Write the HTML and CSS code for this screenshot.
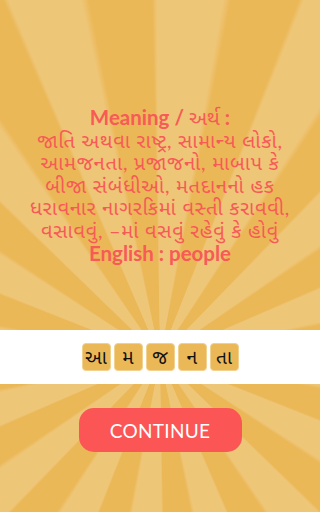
FILE: index.html
```html
<!DOCTYPE html>
<html lang="gu">
<head>
<meta charset="utf-8">
<title>Meaning</title>
<link rel="stylesheet" href="styles.css">
</head>
<body>
<div class="screen">
  <div class="meaning">
    <div class="label">Meaning / <span class="gu">અર્થ</span> :</div>
    <div class="gu-text">જાતિ અથવા રાષ્ટ્ર, સામાન્ય લોકો,<br>આમજનતા, પ્રજાજનો, માબાપ કે<br>બીજા સંબંધીઓ, મતદાનનો હક<br>ધરાવનાર નાગરકિમાં વસ્તી કરાવવી,<br>વસાવવું, –માં વસવું રહેવું કે હોવું</div>
    <div class="label">English : people</div>
  </div>
  <div class="band">
    <div class="tiles">
      <span class="tile">આ</span>
      <span class="tile">મ</span>
      <span class="tile">જ</span>
      <span class="tile">ન</span>
      <span class="tile">તા</span>
    </div>
  </div>
  <div class="actions">
    <button class="continue">CONTINUE</button>
  </div>
</div>
</body>
</html>
```
FILE: styles.css
```css
html, body {
  margin: 0;
  padding: 0;
}
body {
  height: 512px;
  overflow: hidden;
  font-family: Lato, "Noto Sans Gujarati", "Noto Sans", sans-serif;
}
.screen {
  height: 512px;
  display: flex;
  flex-direction: column;
  background-color: #ebb858;
  background-image: repeating-conic-gradient(from -0.5deg at 50% 357px,
    #eec678 0deg, #eec678 10.5deg, #ebb858 11.75deg, #ebb858 21.75deg, #eec678 22.5deg);
}
.meaning {
  padding-top: 106px;
  text-align: center;
  color: #f85a56;
  font-size: 20.5px;
  line-height: 22.6px;
  white-space: nowrap;
}
.label {
  font-weight: 700;
}
.gu {
  font-weight: 400;
}
.gu-text {
  font-weight: 400;
  font-size: 20px;
  letter-spacing: 0.7px;
}
.band {
  margin-top: 66px;
  height: 54px;
  background: #ffffff;
  display: flex;
  align-items: center;
  justify-content: center;
}
.tiles {
  display: flex;
  gap: 3px;
}
.tile {
  width: 27px;
  height: 26px;
  border: 1px solid #f2d08e;
  border-radius: 4px;
  background: #ebb858;
  color: #111111;
  font-size: 19px;
  font-weight: 400;
  line-height: 26px;
  text-align: center;
}
.actions {
  margin-top: 24px;
  display: flex;
  justify-content: center;
}
.continue {
  width: 163px;
  height: 44px;
  border: none;
  border-radius: 15px;
  background: #fc5555;
  color: #ffffff;
  font-family: Lato, "Open Sans", sans-serif;
  font-size: 19px;
  letter-spacing: 0.3px;
  padding: 0;
}
```
